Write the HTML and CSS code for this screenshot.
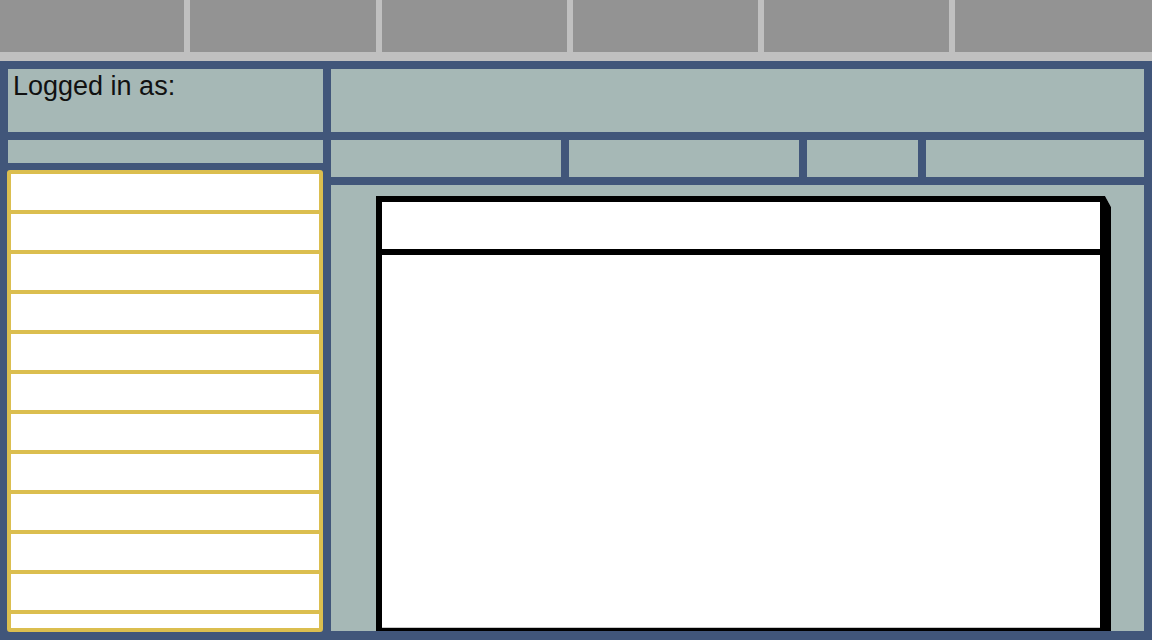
FILE: index.html
```html
<!DOCTYPE html>
<html lang="en">
<head>
<meta charset="utf-8">
<title>Console</title>
<link rel="stylesheet" href="styles.css">
</head>
<body>
<div class="topbar">
  <div class="tile t1"></div>
  <div class="tile t2"></div>
  <div class="tile t3"></div>
  <div class="tile t4"></div>
  <div class="tile t5"></div>
  <div class="tile t6"></div>
</div>
<div class="main">
  <div class="leftcol">
    <div class="panel login">Logged in as:</div>
    <div class="panel sub"></div>
    <ul class="list">
      <li></li><li></li><li></li><li></li><li></li><li></li>
      <li></li><li></li><li></li><li></li><li></li><li></li>
    </ul>
  </div>
  <div class="rightcol">
    <div class="panel header"></div>
    <div class="tabs">
      <div class="panel tab tab1"></div>
      <div class="panel tab tab2"></div>
      <div class="panel tab tab3"></div>
      <div class="panel tab tab4"></div>
    </div>
    <div class="panel content">
      <div class="window">
        <div class="win-head"></div>
        <div class="win-body"></div>
      </div>
    </div>
  </div>
</div>
</body>
</html>
```
FILE: styles.css
```css
html, body {
  margin: 0;
  padding: 0;
}
body {
  width: 1152px;
  height: 640px;
  overflow: hidden;
  background: #41567a;
  font-family: "Liberation Sans", Arial, sans-serif;
}
.topbar {
  display: flex;
  gap: 6px;
  height: 52px;
  padding-bottom: 9px;
  background: #c0c0c0;
}
.tile {
  background: #939393;
  height: 52px;
}
.t1 { width: 184px; }
.t2 { width: 186px; }
.t3 { width: 185px; }
.t4 { width: 185px; }
.t5 { width: 185px; }
.t6 { flex: 1; }

.main {
  display: flex;
  gap: 8px;
  height: 579px;
  padding: 8px 8px 0 8px;
  box-sizing: border-box;
  background: #41567a;
}
.panel {
  background: #a6b8b6;
}
.leftcol {
  width: 315px;
  display: flex;
  flex-direction: column;
}
.login {
  height: 63px;
  font-size: 27px;
  line-height: 30px;
  color: #111;
  padding: 2px 0 0 5px;
  box-sizing: border-box;
}
.sub {
  height: 23px;
  margin-top: 8px;
}
.list {
  list-style: none;
  margin: 7px 0 0 -1px;
  padding: 0;
  width: 316px;
  height: 462px;
  box-sizing: border-box;
  border: 4px solid #dbbe4f;
  border-radius: 3px;
  background: #fff;
  overflow: hidden;
}
.list li {
  height: 36px;
  border-bottom: 4px solid #dbbe4f;
}
.rightcol {
  flex: 1;
  display: flex;
  flex-direction: column;
}
.header {
  height: 63px;
}
.tabs {
  display: flex;
  gap: 8px;
  height: 37px;
  margin-top: 8px;
}
.tab1 { width: 230px; }
.tab2 { width: 230px; }
.tab3 { width: 111px; }
.tab4 { flex: 1; }
.content {
  margin-top: 8px;
  height: 446px;
  padding: 11px 33px 0 45px;
  box-sizing: border-box;
  overflow: hidden;
  display: flex;
  flex-direction: column;
}
.window {
  flex: 1;
  display: flex;
  flex-direction: column;
  background: #fff;
  border-style: solid;
  border-color: #000;
  border-width: 6px 11px 3px 6px;
  clip-path: polygon(0 0, calc(100% - 6px) 0, 100% 11px, 100% 100%, 0 100%);
}
.win-head {
  height: 47px;
  border-bottom: 6px solid #000;
  background: #fff;
}
.win-body {
  flex: 1;
  background: #fff;
  border-bottom: 1px solid #c8c8c8;
}
```
